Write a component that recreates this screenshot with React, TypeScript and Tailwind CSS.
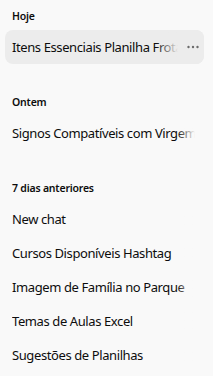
import React from 'react';

type Section = { label: string; items: string[] };

const sections: Section[] = [
  { label: 'Hoje', items: ['Itens Essenciais Planilha Frota'] },
  { label: 'Ontem', items: ['Signos Compatíveis com Virgem'] },
  {
    label: '7 dias anteriores',
    items: [
      'New chat',
      'Cursos Disponíveis Hashtag',
      'Imagem de Família no Parque',
      'Temas de Aulas Excel',
      'Sugestões de Planilhas',
    ],
  },
];

function Dots() {
  return (
    <svg width="14" height="14" viewBox="0 0 14 14" fill="#6b6b6b">
      <circle cx="2.5" cy="7" r="1.2" />
      <circle cx="7" cy="7" r="1.2" />
      <circle cx="11.5" cy="7" r="1.2" />
    </svg>
  );
}

export default function App() {
  return (
    <div className="w-[213px] h-[376px] overflow-hidden bg-[#f9f9f9] text-[#0d0d0d] font-['Noto_Sans','Open_Sans',sans-serif]">
      <div className="flex flex-col gap-[22px] pl-[5px] pr-[9px]">
        {sections.map((s, si) => (
          <div key={s.label} className="flex flex-col">
            <h3 className="h-[30px] pt-[8px] px-[7px] text-[10.5px] tracking-[-0.2px] font-semibold leading-[16px]">
              {s.label}
            </h3>
            {s.items.map((item, i) => {
              const active = si === 0 && i === 0;
              return (
                <div
                  key={item}
                  className={`relative h-[34px] flex items-center pl-[7px] pr-[9px] rounded-lg overflow-hidden ${active ? 'bg-[#ececec]' : ''}`}
                >
                  <div className="relative flex-1 min-w-0 whitespace-nowrap overflow-hidden text-[13px] tracking-[-0.4px] leading-[20px]">
                    {item}
                    {!active && (
                      <div className="absolute top-0 bottom-0 right-0 w-[18px] bg-gradient-to-l from-[#f9f9f9] to-transparent" />
                    )}
                  </div>
                  {active && (
                    <>
                      <div className="absolute top-0 bottom-0 right-[26px] w-[22px] bg-gradient-to-l from-[#ececec] to-transparent" />
                      <div className="absolute top-0 bottom-0 right-0 w-[26px] bg-[#ececec]" />
                      <div className="absolute right-[4px] top-[10px]">
                        <Dots />
                      </div>
                    </>
                  )}
                </div>
              );
            })}
          </div>
        ))}
      </div>
    </div>
  );
}
